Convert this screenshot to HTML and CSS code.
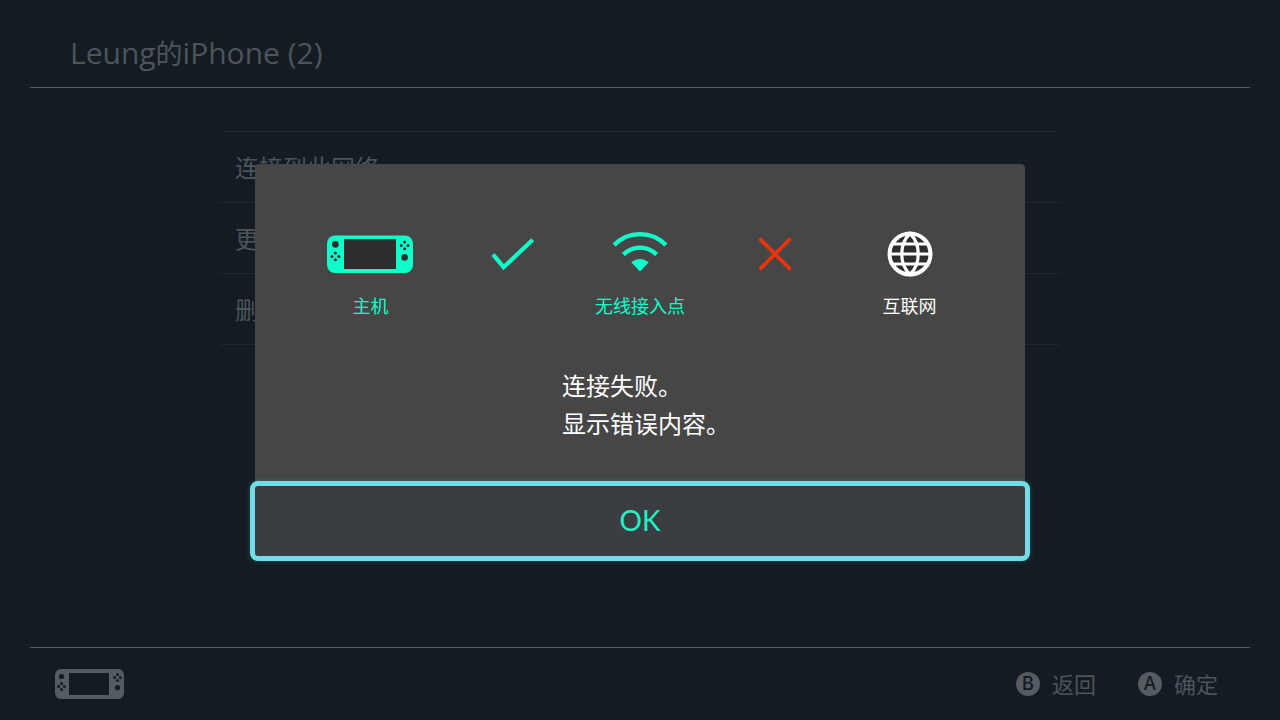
FILE: index.html
```
<!DOCTYPE html>
<html lang="zh-CN">

<head>
    <meta charset="UTF-8">
    <meta name="viewport" content="width=device-width, initial-scale=1.0">
    <title>Leung的iPhone (2)</title>
    <link rel="stylesheet" href="styles.css">
</head>

<body>
    <div class="screen">
        <header class="header">
            <h1 class="title">Leung<span class="title-cjk">的</span>iPhone (2)</h1>
        </header>

        <main class="content">
            <ul class="menu">
                <li><button class="menu-item" type="button">连接到此网络</button></li>
                <li><button class="menu-item" type="button">更改设置</button></li>
                <li><button class="menu-item" type="button">删除设置</button></li>
            </ul>
        </main>

        <footer class="footer">
            <svg class="controller" width="69" height="30" viewBox="0 0 69 30" aria-hidden="true">
                <path fill="currentColor" d="M6 0H63a6 6 0 0 1 6 6V24a6 6 0 0 1-6 6H6a6 6 0 0 1-6-6V6a6 6 0 0 1 6-6Z" />
                <g class="holes">
                    <rect x="14" y="4" width="40" height="22" />
                    <circle cx="6.5" cy="7.5" r="2.6" />
                    <circle cx="6.5" cy="14.4" r="1.5" />
                    <circle cx="3.6" cy="17.4" r="1.5" />
                    <circle cx="9.4" cy="17.4" r="1.5" />
                    <circle cx="6.5" cy="20.4" r="1.5" />
                    <circle cx="62.5" cy="5.4" r="1.5" />
                    <circle cx="59.6" cy="8.4" r="1.5" />
                    <circle cx="65.4" cy="8.4" r="1.5" />
                    <circle cx="62.5" cy="11.4" r="1.5" />
                    <circle cx="62.5" cy="18.6" r="2.6" />
                </g>
            </svg>
            <div class="hints">
                <button class="hint" type="button"><span class="key">B</span><span class="hint-text">返回</span></button>
                <button class="hint" type="button"><span class="key">A</span><span class="hint-text">确定</span></button>
            </div>
        </footer>

        <div class="overlay">
            <div class="dialog" role="alertdialog" aria-modal="true" aria-describedby="message">
                <div class="steps">
                    <div class="step ok">
                        <svg width="86" height="46" viewBox="0 0 86 46" aria-hidden="true">
                            <rect y="4.5" width="86" height="37.5" rx="8" fill="currentColor" />
                            <g class="holes">
                                <rect x="17" y="8" width="52" height="30" />
                                <circle cx="8.4" cy="13.4" r="3.3" />
                                <circle cx="8.4" cy="22" r="1.5" />
                                <circle cx="5" cy="25.4" r="1.5" />
                                <circle cx="11.8" cy="25.4" r="1.5" />
                                <circle cx="8.4" cy="28.8" r="1.5" />
                                <circle cx="77.6" cy="11" r="1.5" />
                                <circle cx="74.2" cy="14.4" r="1.5" />
                                <circle cx="81" cy="14.4" r="1.5" />
                                <circle cx="77.6" cy="17.8" r="1.5" />
                                <circle cx="77.6" cy="26.4" r="3.3" />
                            </g>
                        </svg>
                        <span class="step-label">主机</span>
                    </div>
                    <div class="step ok">
                        <svg width="60" height="46" viewBox="0 0 60 46" role="img" aria-label="成功">
                            <path d="M18 23.5L28.6 36.200L57.7 8.800" fill="none" stroke="currentColor" stroke-width="4.2" />
                        </svg>
                    </div>
                    <div class="step ok">
                        <svg width="60" height="46" viewBox="0 0 60 46" aria-hidden="true">
                            <path d="M4.200 14A36 36 0 0 1 55.800 14M13.500 23.600A23 23 0 0 1 46.500 23.600" fill="none" stroke="currentColor" stroke-width="4.4" />
                            <path d="M21.2 31.2Q30 25 38.8 31.2L30 40.5Z" fill="currentColor" />
                        </svg>
                        <span class="step-label">无线接入点</span>
                    </div>
                    <div class="step fail">
                        <svg width="46" height="46" viewBox="0 0 46 46" role="img" aria-label="失败">
                            <path d="M7.5 7.5L38.5 38.5M38.5 7.5L7.5 38.5" fill="none" stroke="currentColor" stroke-width="3.8" />
                        </svg>
                    </div>
                    <div class="step">
                        <svg width="46" height="46" viewBox="0 0 46 46" aria-hidden="true">
                            <circle class="globe" cx="23" cy="23" r="20.5" />
                            <path d="M23 2.500C12 13 12 33 23 43.500C34 33 34 13 23 2.500ZM6 13H40M3 23H43M6 33H40" fill="none" stroke="currentColor" stroke-width="3.2" />
                        </svg>
                        <span class="step-label">互联网</span>
                    </div>
                </div>

                <p class="message" id="message">连接失败。<br>显示错误内容。</p>

                <button class="confirm" type="button">OK</button>
            </div>
        </div>
    </div>
</body>

</html>
```
FILE: styles.css
```
* {
    margin: 0;
    padding: 0;
    box-sizing: border-box;
}

body {
    font-family: "Noto Sans CJK SC", sans-serif;
    background: #141b22;
    color: #4d545c;
}

button {
    font: inherit;
    color: inherit;
    background: none;
    border: none;
    cursor: pointer;
}

.screen {
    position: relative;
    min-height: 100vh;
    display: flex;
    flex-direction: column;
}

.header {
    height: 88px;
    margin: 0 30px;
    padding: 18px 40px 0;
    border-bottom: 1px solid #545b63;
}

.title {
    font-family: "Open Sans", "Noto Sans CJK SC", sans-serif;
    font-size: 30px;
    font-weight: 400;
    line-height: 70px;
}

.title-cjk {
    font-size: 27px;
}

.content {
    flex: 1;
    padding: 43px 30px;
}

.menu {
    max-width: 840px;
    margin: 0 auto;
    list-style: none;
    border-top: 1px solid #1f272e;
}

.menu li {
    border-bottom: 1px solid #1f272e;
}

.menu-item {
    display: block;
    width: 100%;
    height: 70px;
    padding: 0 15px 2px;
    font-size: 24px;
    text-align: left;
}

.footer {
    height: 73px;
    margin: 0 30px;
    padding: 0 32px 0 25px;
    border-top: 1px solid #545b63;
    display: flex;
    align-items: center;
    justify-content: space-between;
}

.controller {
    color: #545b63;
}

.controller .holes {
    fill: #141b22;
}

.hints {
    display: flex;
    gap: 42px;
}

.hint {
    display: flex;
    align-items: center;
    gap: 12px;
    font-size: 22px;
}

.hint-text {
    padding-bottom: 2px;
}

.key {
    width: 24px;
    height: 24px;
    border-radius: 50%;
    background: #545b63;
    color: #141b22;
    font-family: Inter, sans-serif;
    font-size: 18px;
    font-weight: 500;
    line-height: 24px;
    text-align: center;
}

/* 对话框 */
.overlay {
    position: absolute;
    inset: 0;
    display: flex;
    align-items: center;
    justify-content: center;
}

.dialog {
    width: 770px;
    max-width: 90%;
    background: #464646;
    border-radius: 4px;
    color: #fff;
}

.steps {
    display: grid;
    grid-template-columns: repeat(5, 1fr);
    padding: 67px 48px 0;
}

.step {
    display: flex;
    flex-direction: column;
    align-items: center;
    gap: 15px;
}

.step.ok {
    color: #0fffcb;
}

.step.fail {
    color: #e8340f;
}

.step .holes {
    fill: #2d2d2d;
}

.globe {
    fill: #2d2d2d;
    stroke: currentColor;
    stroke-width: 4;
}

.step-label {
    font-size: 18px;
    line-height: 26px;
    white-space: nowrap;
}

.message {
    width: 156px;
    margin: 48px auto 44px;
    font-size: 24px;
    line-height: 38px;
    white-space: nowrap;
}

.confirm {
    display: block;
    width: 100%;
    height: 70px;
    padding-bottom: 2px;
    background: #3a3d42;
    border-radius: 3px;
    outline: 5px solid #74dce6;
    box-shadow: 0 0 4px 6px rgba(38, 160, 170, 0.3);
    color: #1ff5c4;
    font-family: Lato, sans-serif;
    font-size: 28px;
}
```
